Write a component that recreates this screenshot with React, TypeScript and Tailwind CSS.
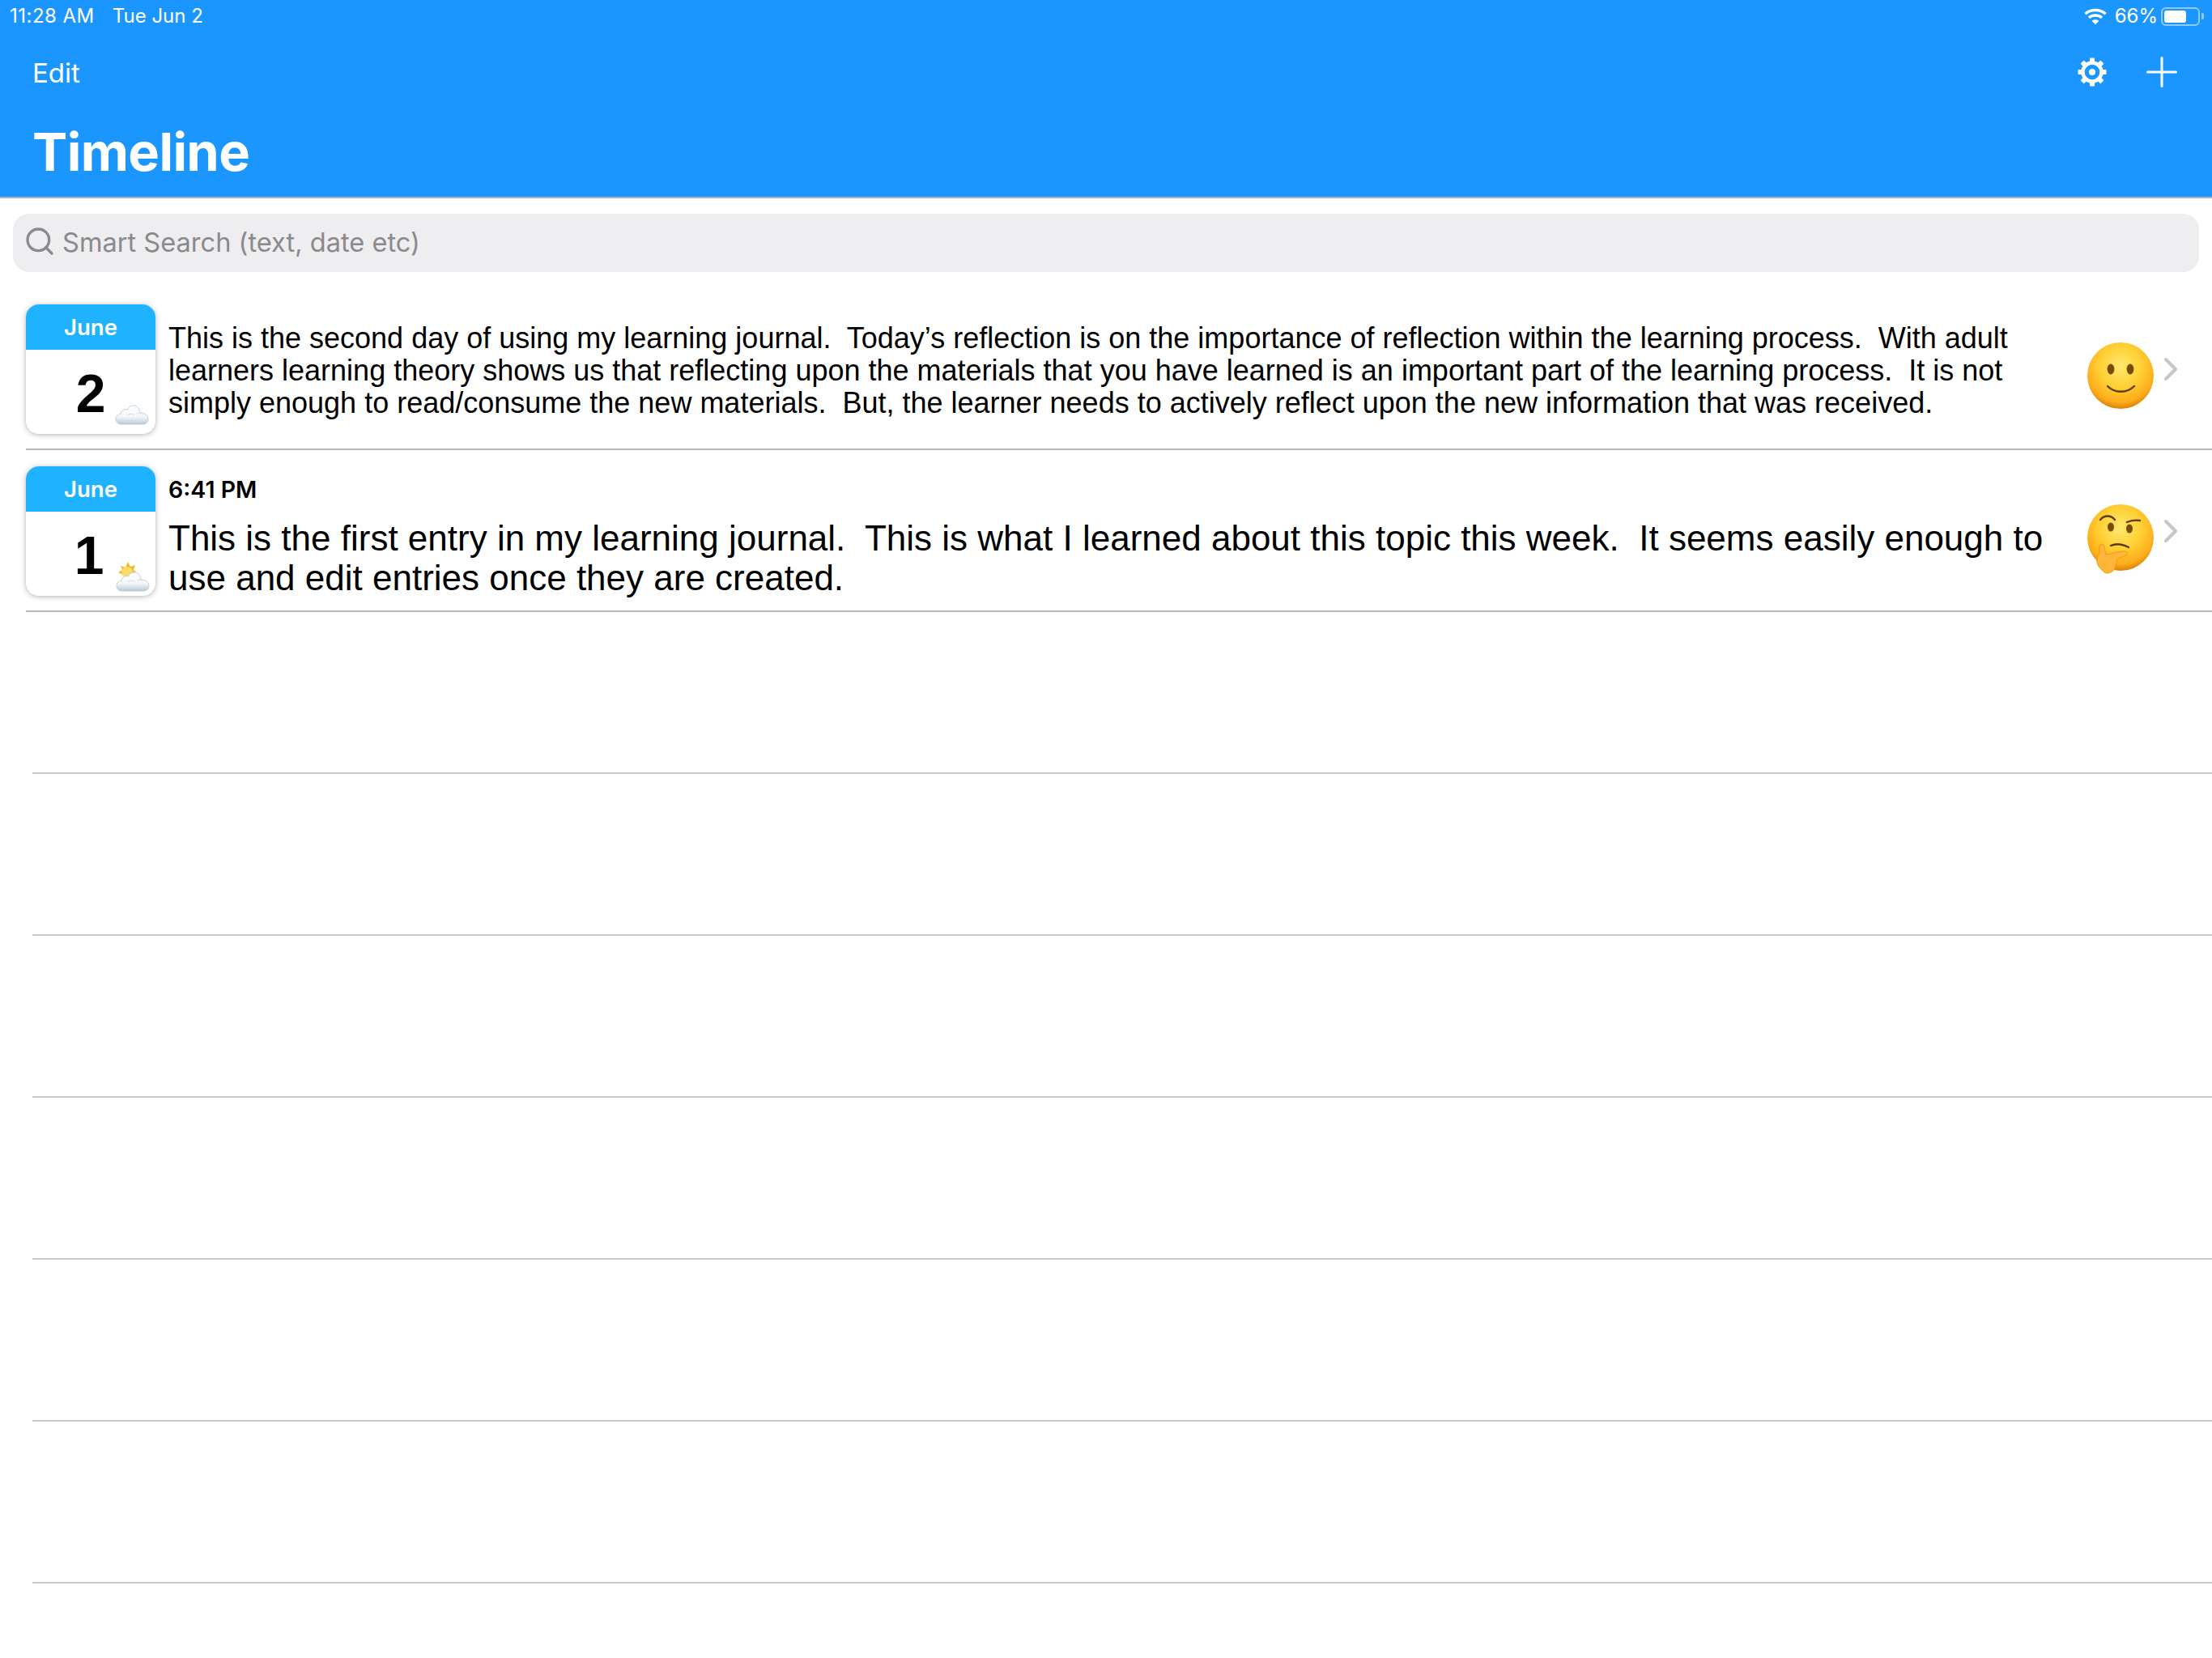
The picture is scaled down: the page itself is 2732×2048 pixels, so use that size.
import { ChevronRight, Plus, Search } from 'lucide-react';

const SF = 'font-["Inter",sans-serif]';
const HELV = 'font-["Liberation_Sans",sans-serif]';

function Wifi() {
  return (
    <svg width="28" height="21" viewBox="0 0 28 21" fill="none" stroke="white" strokeWidth="3.4">
      <path d="M1.5 7.2 C8.5 1 19.5 1 26.5 7.2" />
      <path d="M6 11.8 C10.5 8 17.5 8 22 11.8" />
      <path d="M14 20.5 L9.6 15.8 C12 13.8 16 13.8 18.4 15.8 Z" fill="white" stroke="none" />
    </svg>
  );
}

function Battery() {
  return (
    <div className="flex items-center gap-[2px]">
      <div className="h-[23px] w-[48px] rounded-[6px] border-2 border-white/50 p-[2px]">
        <div className="h-full w-[27px] rounded-[3px] bg-white" />
      </div>
      <div className="h-[8px] w-[3px] rounded-r-[2px] bg-white/50" />
    </div>
  );
}

function Gear() {
  const teeth = [0, 45, 90, 135, 180, 225, 270, 315];
  return (
    <svg width="36" height="36" viewBox="0 0 36 36">
      {teeth.map((a) => (
        <rect key={a} x="15" y="0.5" width="6" height="7" rx="1" fill="white" transform={`rotate(${a} 18 18)`} />
      ))}
      <circle cx="18" cy="18" r="11.5" fill="none" stroke="white" strokeWidth="4.4" />
      <circle cx="18" cy="18" r="4" fill="white" />
    </svg>
  );
}

function Cloud({ sun }: { sun?: boolean }) {
  const id = sun ? 'cloudB' : 'cloudA';
  return (
    <svg width="42" height="38" viewBox="0 0 42 38">
      <defs>
        <linearGradient id={id} x1="0" y1="0" x2="0" y2="1">
          <stop offset="0" stopColor="#ffffff" />
          <stop offset="0.6" stopColor="#f4f7fa" />
          <stop offset="1" stopColor="#b9c8d6" />
        </linearGradient>
      </defs>
      {sun && (
        <g>
          <path d="M3 14 L8 11 L6 6 L12 8 L15 1 L18 7 L24 5 L22 11 L25 14 L14 20 Z" fill="#f2b924" />
          <circle cx="14" cy="14" r="7" fill="#f9dc6c" />
        </g>
      )}
      <path
        d="M7.5 37 C3 37 1 33.5 1 30.5 C1 27 3.5 24.5 7 24.5 C7 20 12 17.5 15.5 19 C17.5 12.5 28 12 30 19 C30.5 21 30.5 22 31 23 C36.5 23 41 26 41 31 C41 34.5 38 37 34.5 37 Z"
        fill={`url(#${id})`}
        stroke="#bccad6"
        strokeWidth="0.9"
      />
      <path d="M15 26 C18 23.5 22 24 24 26 M27 24 C29 23 32 23 33 24" fill="none" stroke="#d3dce4" strokeWidth="1" />
    </svg>
  );
}

function DateCard({ day, sun }: { day: string; sun?: boolean }) {
  return (
    <div className="relative mt-[2px] h-[160px] w-[160px] shrink-0 overflow-hidden rounded-[16px] bg-white shadow-[0_1px_7px_rgba(0,0,0,0.3)]">
      <div className={`flex h-[56px] items-center justify-center pt-[2px] bg-[#1fb3ff] text-[27.5px] font-semibold text-white ${SF}`}>
        June
      </div>
      <div className={`flex h-[104px] items-center justify-center pt-[4px] text-[66px] font-bold leading-none text-black ${HELV}`}>
        <span className={day === '1' ? 'mr-[4px]' : ''}>{day}</span>
      </div>
      <div className={sun ? 'absolute right-[7px] bottom-[5px]' : 'absolute right-[8px] bottom-[11px]'}>
        <Cloud sun={sun} />
      </div>
    </div>
  );
}

function EmojiFace({ thinking }: { thinking?: boolean }) {
  const id = thinking ? 'faceB' : 'faceA';
  return (
    <svg width="86" height="90" viewBox="0 0 86 90" className="shrink-0">
      <defs>
        <radialGradient id={id} cx="0.5" cy="0.36" r="0.64">
          <stop offset="0" stopColor="#ffe970" />
          <stop offset="0.5" stopColor="#ffcf33" />
          <stop offset="0.85" stopColor="#fcab1a" />
          <stop offset="1" stopColor="#d98206" />
        </radialGradient>
      </defs>
      <circle cx="43" cy="43" r="41" fill={`url(#${id})`} />
      {thinking ? (
        <g>
          <ellipse cx="31" cy="30" rx="4" ry="5.5" fill="#7a4a00" />
          <ellipse cx="54" cy="32" rx="4" ry="5.5" fill="#7a4a00" />
          <path d="M18 21 C23 15 31 15 36 21" fill="none" stroke="#5e3a08" strokeWidth="2.4" strokeLinecap="round" />
          <path d="M51 24 C56 22 61 21 67 22" fill="none" stroke="#5e3a08" strokeWidth="2.4" strokeLinecap="round" />
          <path d="M31 53 C38 50 47 52 53 55" fill="none" stroke="#5e3a08" strokeWidth="2.4" strokeLinecap="round" />
          <path
            d="M19 82 C12 76 13 68 17 62 C16 56 17 51 20 51 C24 51 23 58 25 64 C33 63 43 59 50 60 C53 61 52 65 47 66 C43 68 39 69 38 70 C39 73 38 75 37 77 C37 82 33 87 26 87 C23 87 21 84 19 82 Z"
            fill="#ffb638"
            stroke="#ec960e"
            strokeWidth="0.9"
          />
        </g>
      ) : (
        <g>
          <ellipse cx="31" cy="35" rx="4.4" ry="6.4" fill="#7a4a00" />
          <ellipse cx="55" cy="35" rx="4.4" ry="6.4" fill="#7a4a00" />
          <path d="M27 56 C36 65 51 65 60 56" fill="none" stroke="#5e3a08" strokeWidth="2.4" strokeLinecap="round" />
        </g>
      )}
    </svg>
  );
}

function EntryRow({
  day,
  time,
  text,
  thinking,
  sun,
}: {
  day: string;
  time?: string;
  text: string;
  thinking?: boolean;
  sun?: boolean;
}) {
  return (
    <div className="ml-[32px] flex h-[200px] items-center border-b-2 border-[#b8b8b8]">
      <DateCard day={day} sun={sun} />
      <div className={`ml-[16px] flex w-[2340px] shrink-0 flex-col text-black ${time ? 'pt-[16px]' : 'pt-[6px]'}`}>
        {time && <div className={`mb-[18px] text-[28.5px] leading-[34px] font-semibold ${SF}`}>{time}</div>}
        <p className={`whitespace-pre-wrap ${HELV} ${time ? 'text-[44px] leading-[49px]' : 'text-[36px] leading-[40px]'}`}>
          {text}
        </p>
      </div>
      <div className="ml-[28px] mt-[22px] shrink-0">
        <EmojiFace thinking={thinking} />
      </div>
      <ChevronRight size={48} strokeWidth={2} className="-ml-[5px] mt-[2px] shrink-0 text-[#c6c6c8]" />
    </div>
  );
}

export default function App() {
  return (
    <div className={`h-[2048px] w-[2732px] overflow-hidden bg-white ${SF}`}>
      <header className="h-[245px] border-b-2 border-[#b0b0b0] bg-[#1c96ff] text-white">
        <div className="flex h-[40px] items-center justify-between pr-[10px] pl-[12px] text-[24px]">
          <div className="flex gap-[22px]">
            <span className="tracking-[0.02em]">11:28 AM</span>
            <span>Tue Jun 2</span>
          </div>
          <div className="flex items-center">
            <Wifi />
            <span className="mr-[4px] ml-[10px]">66%</span>
            <Battery />
          </div>
        </div>
        <div className="flex h-[98px] items-center justify-between pr-[32px] pl-[40px]">
          <span className="pt-[3px] text-[33px]">Edit</span>
          <div className="flex items-center gap-[38px]">
            <Gear />
            <Plus size={60} strokeWidth={1.2} />
          </div>
        </div>
        <h1 className="mt-[12px] pl-[40px] text-[65px] leading-[76px] font-bold tracking-[-0.01em]">Timeline</h1>
      </header>
      <div className="mx-[16px] mt-[19px] mb-[20px] flex h-[72px] items-center gap-[8px] rounded-[20px] bg-[#eeeef0] pl-[13px] text-[#8a8a8e]">
        <Search size={40} strokeWidth={2} className="-mt-[5px]" />
        <span className="-mt-[2px] text-[32.6px]">Smart Search (text, date etc)</span>
      </div>
      <EntryRow
        day="2"
        text="This is the second day of using my learning journal.  Today’s reflection is on the importance of reflection within the learning process.  With adult learners learning theory shows us that reflecting upon the materials that you have learned is an important part of the learning process.  It is not simply enough to read/consume the new materials.  But, the learner needs to actively reflect upon the new information that was received."
      />
      <EntryRow
        day="1"
        sun
        thinking
        time="6:41 PM"
        text="This is the first entry in my learning journal.  This is what I learned about this topic this week.  It seems easily enough to use and edit entries once they are created."
      />
      {[0, 1, 2, 3, 4, 5].map((i) => (
        <div key={i} className="ml-[40px] h-[200px] border-b-2 border-[#c8c8c8]" />
      ))}
    </div>
  );
}
